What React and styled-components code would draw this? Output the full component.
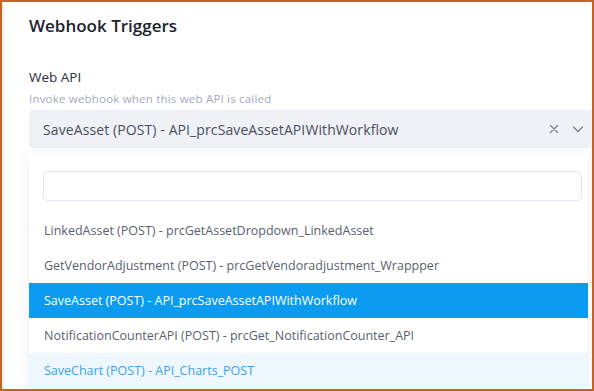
import React from "react";
import styled, { createGlobalStyle } from "styled-components";

const Global = createGlobalStyle`
  html, body { margin: 0; padding: 0; background: #fff; }
  body { font-family: "Open Sans", "Noto Sans", sans-serif; }
  * { box-sizing: border-box; }
`;

const Frame = styled.div`
  width: 594px;
  height: 391px;
  border: 2px solid #c8621f;
  box-shadow: inset 2px 0 2px rgba(0,0,0,0.08);
  overflow: hidden;
  padding: 14px 0 0 27px;
  background: #fff;
  display: flex;
  flex-direction: column;
`;

const Title = styled.h2`
  margin: 0;
  font-size: 17px;
  line-height: 20px;
  font-weight: 600;
  color: #1e2330;
`;

const Label = styled.div`
  margin-top: 32px;
  font-size: 13.5px;
  line-height: 18px;
  font-weight: 500;
  color: #2a2f3b;
`;

const Hint = styled.div`
  margin-top: 5px;
  font-size: 11.5px;
  letter-spacing: 0.2px;
  line-height: 16px;
  color: #a4aabd;
`;

const Select = styled.div`
  margin-top: 3px;
  margin-right: -8px;
  height: 38px;
  background: #eef1f5;
  border-radius: 4px;
  display: flex;
  align-items: center;
  padding: 0 16px 0 14px;
  gap: 12px;
`;

const Value = styled.span`
  flex: 1;
  font-size: 14px;
  letter-spacing: 0.1px;
  font-weight: 500;
  color: #4a4f5e;
  white-space: nowrap;
`;

const Icon = styled.svg`
  width: 12px;
  height: 12px;
  stroke: #7d8393;
  fill: none;
  stroke-width: 1.4;
  stroke-linecap: round;
  stroke-linejoin: round;
`;

const Menu = styled.div`
  margin-top: 5px;
  margin-right: 4px;
  flex: 1;
  background: #fff;
  box-shadow: 0 0 14px rgba(0,0,0,0.07);
  padding-top: 18px;
  display: flex;
  flex-direction: column;
`;

const Search = styled.input`
  margin: 0 6px 12px 14px;
  height: 30px;
  border: 1px solid #e3e5ec;
  border-radius: 5px;
  outline: none;
  background: #fff;
`;

const Option = styled.div`
  height: 35px;
  display: flex;
  align-items: center;
  padding-left: 15px;
  font-size: 12.5px;
  white-space: nowrap;
  color: ${p => (p.$selected ? "#fff" : p.$hover ? "#3aa2ee" : "#5a5f6e")};
  background: ${p => (p.$selected ? "#0b9bf0" : p.$hover ? "#eef7fe" : "#fff")};
`;

const options = [
  { label: "LinkedAsset (POST) - prcGetAssetDropdown_LinkedAsset" },
  { label: "GetVendorAdjustment (POST) - prcGetVendoradjustment_Wrappper" },
  { label: "SaveAsset (POST) - API_prcSaveAssetAPIWithWorkflow", selected: true },
  { label: "NotificationCounterAPI (POST) - prcGet_NotificationCounter_API" },
  { label: "SaveChart (POST) - API_Charts_POST", hover: true },
];

export default function App() {
  return (
    <>
      <Global />
      <Frame>
        <Title>Webhook Triggers</Title>
        <Label>Web API</Label>
        <Hint>Invoke webhook when this web API is called</Hint>
        <Select>
          <Value>SaveAsset (POST) - API_prcSaveAssetAPIWithWorkflow</Value>
          <Icon viewBox="0 0 12 12">
            <path d="M2.5 2.5l7 7M9.5 2.5l-7 7" />
          </Icon>
          <Icon viewBox="0 0 12 12">
            <path d="M1.5 4l4.5 4.5L10.5 4" />
          </Icon>
        </Select>
        <Menu>
          <Search />
          {options.map(o => (
            <Option key={o.label} $selected={o.selected} $hover={o.hover}>
              {o.label}
            </Option>
          ))}
        </Menu>
      </Frame>
    </>
  );
}
